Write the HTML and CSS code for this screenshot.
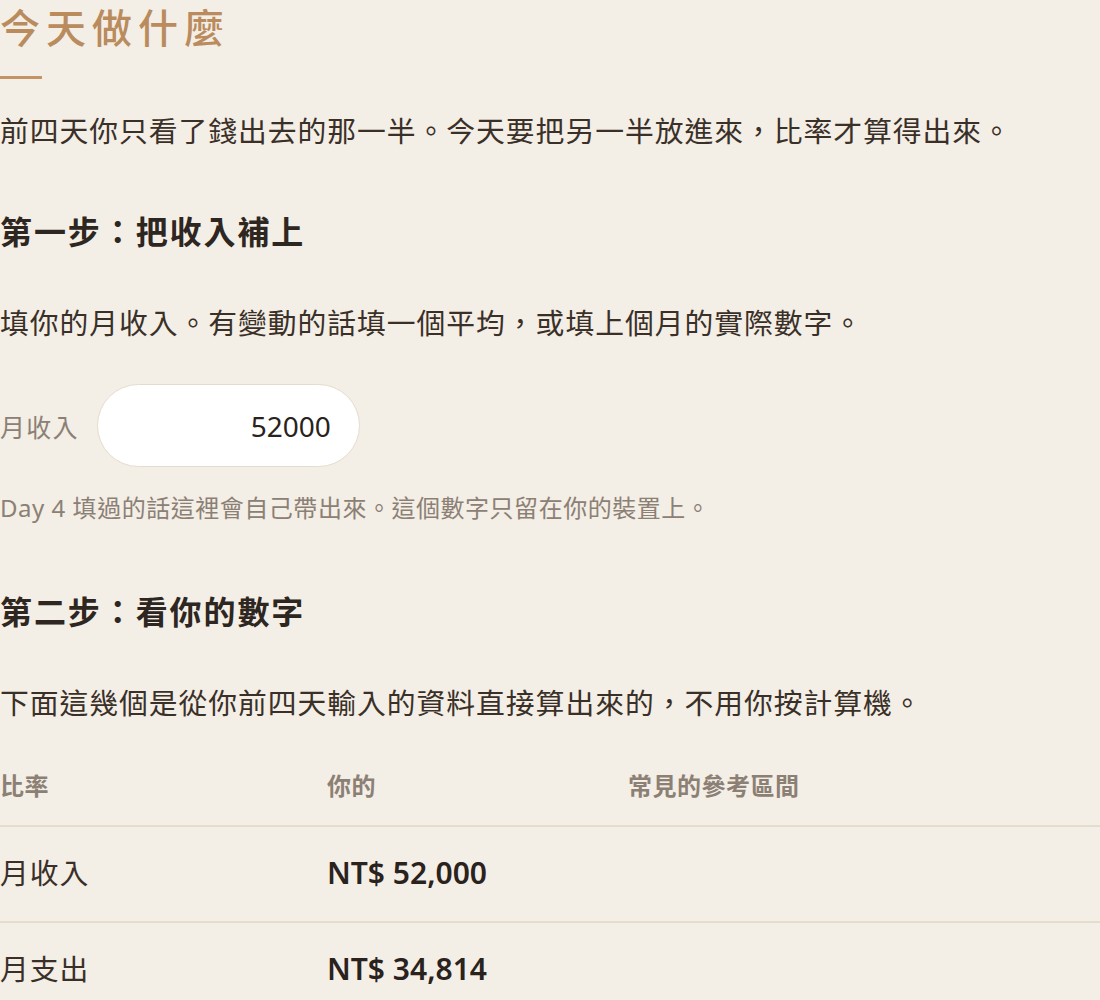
FILE: index.html
```html
<!DOCTYPE html>
<html lang="zh-TW">

<head>
    <meta charset="UTF-8">
    <meta name="viewport" content="width=device-width, initial-scale=1.0">
    <title>今天做什麼</title>
    <link rel="stylesheet" href="styles.css">
</head>

<body>

    <div class="page">
        <h1 class="tit">今天做什麼</h1>
        <div class="tit-bar"></div>

        <p class="lead">前四天你只看了錢出去的那一半。今天要把另一半放進來，比率才算得出來。</p>

        <h2 class="step step-one">第一步：把收入補上</h2>
        <p class="text">填你的月收入。有變動的話填一個平均，或填上個月的實際數字。</p>

        <div class="form-row">
            <label for="income">月收入</label>
            <input type="text" id="income" name="income" value="52000">
        </div>
        <p class="hint">Day 4 填過的話這裡會自己帶出來。這個數字只留在你的裝置上。</p>

        <h2 class="step step-two">第二步：看你的數字</h2>
        <p class="text">下面這幾個是從你前四天輸入的資料直接算出來的，不用你按計算機。</p>

        <table class="ratios">
            <thead>
                <tr>
                    <th class="col-name">比率</th>
                    <th class="col-mine">你的</th>
                    <th>常見的參考區間</th>
                </tr>
            </thead>
            <tbody>
                <tr>
                    <td>月收入</td>
                    <td class="val">NT$ 52,000</td>
                    <td></td>
                </tr>
                <tr>
                    <td>月支出</td>
                    <td class="val">NT$ 34,814</td>
                    <td></td>
                </tr>
            </tbody>
        </table>
    </div>

</body>

</html>
```

FILE: styles.css
```css
body {
    background-color: #f3eee6;
    font-family: "Noto Sans", "Noto Sans CJK TC", sans-serif;
    color: #3a3028;
    margin: 0;
    padding: 0;
    overflow: hidden;
}

.page {
    padding: 2px 0 0 0;
    letter-spacing: 0.06em;
}

.tit {
    font-size: 40px;
    line-height: 52px;
    font-weight: 500;
    color: #b98b5d;
    letter-spacing: 0.15em;
    margin: 0;
}

.tit-bar {
    width: 42px;
    height: 3px;
    background-color: #c29466;
    margin-top: 22px;
}

p {
    margin: 0;
}

.lead,
.text {
    font-size: 28.8px;
    line-height: 49px;
}

.lead {
    margin-top: 27px;
}

.step {
    font-size: 32px;
    line-height: 48px;
    font-weight: 700;
    letter-spacing: 0.06em;
    color: #2e2620;
    margin: 53px 0 0 0;
}

.step + .text {
    margin-top: 42px;
}

.step-two {
    margin-top: 61px;
}

.form-row {
    display: flex;
    align-items: center;
    gap: 18px;
    margin-top: 37px;
}

.form-row label {
    font-size: 25px;
    letter-spacing: 0.05em;
    color: #8c8075;
}

.form-row input {
    width: 263px;
    height: 83px;
    box-sizing: border-box;
    border: 1px solid #e6dccd;
    border-radius: 42px;
    background-color: #fff;
    padding: 0 28px;
    font-family: inherit;
    font-size: 28px;
    letter-spacing: 0;
    color: #2a221c;
    text-align: right;
    outline: none;
}

.hint {
    font-size: 24px;
    line-height: 38px;
    letter-spacing: 0.022em;
    color: #8c8075;
    margin-top: 22px;
}

.ratios {
    width: 100%;
    margin-top: 20px;
    border-collapse: collapse;
}

th,
td {
    text-align: left;
    padding: 0;
}

th {
    font-size: 24px;
    line-height: 38px;
    font-weight: 600;
    letter-spacing: 0.02em;
    color: #8c8075;
    padding: 20px 0;
    border-bottom: 2px solid #e6dccd;
}

.col-name {
    width: 327px;
}

.col-mine {
    width: 301px;
}

td {
    font-size: 28.8px;
    line-height: 46px;
    padding: 23px 0 25px 0;
    border-bottom: 2px solid #e6dccd;
}

td.val {
    font-size: 30px;
    font-weight: 600;
    letter-spacing: 0;
    color: #2a221c;
}
```
